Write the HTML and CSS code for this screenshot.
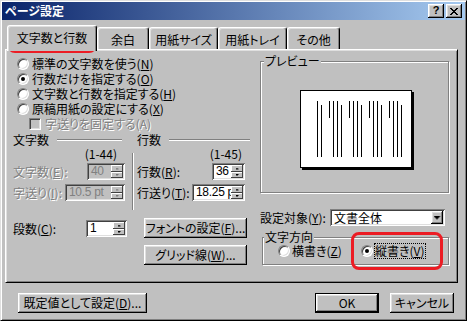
FILE: index.html
```html
<!DOCTYPE html>
<html lang="ja">
<head>
<meta charset="utf-8">
<title>ページ設定</title>
<link rel="stylesheet" href="styles.css">
</head>
<body>
<div class="window">
  <div class="titlebar">
    <span class="title">ページ設定</span>
    <div class="tbtns">
      <span class="tbtn help">?</span>
      <span class="tbtn"><svg width="8" height="7" viewBox="0 0 8 7" shape-rendering="crispEdges"><path d="M0 0h2v1h-2zM6 0h2v1h-2zM1 1h2v1h-2zM5 1h2v1h-2zM2 2h4v1h-4zM3 3h2v1h-2zM2 4h4v1h-4zM1 5h2v1h-2zM5 5h2v1h-2zM0 6h2v1h-2zM6 6h2v1h-2z"/></svg></span>
    </div>
  </div>
  <div class="client">
    <div class="tabs">
      <div class="tab active t1">文字数と行数</div>
      <div class="tab t2">余白</div>
      <div class="tab t3">用紙サイズ</div>
      <div class="tab t4">用紙トレイ</div>
      <div class="tab t5">その他</div>
    </div>
    <div class="panel">
      <div class="col-left">
        <div class="options">
          <div class="opt"><span class="radio"></span><span>標準の文字数を使う(<u>N</u>)</span></div>
          <div class="opt"><span class="radio on"></span><span>行数だけを指定する(<u>O</u>)</span></div>
          <div class="opt"><span class="radio"></span><span>文字数と行数を指定する(<u>H</u>)</span></div>
          <div class="opt"><span class="radio"></span><span>原稿用紙の設定にする(<u>X</u>)</span></div>
          <div class="opt sub"><span class="check"></span><span class="dis">字送りを固定する(A)</span></div>
        </div>
        <div class="groups">
          <div class="group g1">
            <div class="ghead">文字数</div>
            <div class="range">(1-44)</div>
            <div class="frow">
              <span class="dis">文字数(<u>E</u>):</span>
              <span class="spin off w38"><span class="val">40</span><span class="arrows"><span class="arr up"></span><span class="arr dn"></span></span></span>
            </div>
            <div class="frow">
              <span class="dis">字送り(<u>I</u>):</span>
              <span class="spin off w60"><span class="val">10.5 pt</span><span class="arrows"><span class="arr up"></span><span class="arr dn"></span></span></span>
            </div>
          </div>
          <div class="sep"></div>
          <div class="group g2">
            <div class="ghead">行数</div>
            <div class="range">(1-45)</div>
            <div class="frow">
              <span>行数(<u>R</u>):</span>
              <span class="spin w33"><span class="val">36</span><span class="arrows"><span class="arr up"></span><span class="arr dn"></span></span></span>
            </div>
            <div class="frow">
              <span>行送り(<u>T</u>):</span>
              <span class="spin w53"><span class="val">18.25 pt</span><span class="arrows"><span class="arr up"></span><span class="arr dn"></span></span></span>
            </div>
          </div>
        </div>
        <div class="brow">
          <div class="danshu">
            <span>段数(<u>C</u>):</span>
            <span class="spin w41"><span class="val">1</span><span class="arrows"><span class="arr up"></span><span class="arr dn"></span></span></span>
          </div>
          <div class="bcol">
            <div class="btn">フォントの設定(<u>F</u>)...</div>
            <div class="btn">グリッド線(<u>W</u>)...</div>
          </div>
        </div>
      </div>
      <div class="col-right">
        <fieldset class="frame preview">
          <legend>プレビュー</legend>
          <div class="pv-body">
            <div class="page">
              <svg width="110" height="76" viewBox="0 0 110 76" shape-rendering="crispEdges"><path fill="none" stroke="#000" stroke-width="1" d="M16.5 10V66M20.5 14V66M28.5 10V27M32.5 10V66M36.5 10V66M40.5 14V66M48.5 10V27M52.5 10V66M56.5 10V66M60.5 14V66M68.5 10V27M72.5 10V66M76.5 10V66M80.5 14V66M88.5 10V27M92.5 10V66M96.5 10V66M100.5 14V66"/></svg>
            </div>
          </div>
        </fieldset>
        <div class="target">
          <span>設定対象(<u>Y</u>):</span>
          <span class="select"><span class="val">文書全体</span><span class="ddbtn"></span></span>
        </div>
        <fieldset class="frame dir">
          <legend>文字方向</legend>
          <div class="dir-row">
            <div class="dopt first"><span class="radio"></span><span>横書き(<u>Z</u>)</span></div>
            <div class="dopt"><span class="radio on"></span><span class="focus">縦書き(<u>V</u>)</span></div>
          </div>
        </fieldset>
      </div>
    </div>
    <div class="footer">
      <div class="btn b-default">既定値として設定(<u>D</u>)...</div>
      <div class="btn b-ok">OK</div>
      <div class="btn b-cancel">キャンセル</div>
    </div>
  </div>
  <div class="mark mark-tab"></div>
  <div class="mark mark-dir"></div>
</div>
</body>
</html>
```

FILE: styles.css
```css
* { box-sizing: border-box; }
html, body { margin: 0; padding: 0; }
body {
  width: 467px; height: 321px; overflow: hidden;
  background: #c0c0c0; color: #000;
  font: 12px/14px "Noto Sans CJK JP", "MS UI Gothic", sans-serif;
  font-feature-settings: "palt";
}
u { text-decoration: underline; text-underline-offset: 1px; }

.window {
  position: relative;
  width: 467px; height: 321px;
  background: #c0c0c0;
  border: 1px solid; border-color: #dfdfdf #000 #000 #dfdfdf;
  box-shadow: inset 1px 1px #fff, inset -1px -1px #808080;
  padding: 1px;
  display: flex; flex-direction: column;
}
.titlebar {
  height: 18px; flex: none;
  display: flex; align-items: center; justify-content: space-between;
  background: linear-gradient(to right, #0a246a, #a6caf0);
  padding: 0 3px;
}
.title { color: #fff; font-weight: bold; }
.tbtns { display: flex; gap: 2px; }
.tbtn {
  width: 16px; height: 14px;
  background: #c0c0c0;
  box-shadow: inset -1px -1px #000, inset 1px 1px #fff, inset -2px -2px #808080, inset 2px 2px #dfdfdf;
  display: flex; align-items: center; justify-content: center;
}
.help { font: bold 11px/1 "Liberation Sans", sans-serif; padding-bottom: 1px; }

.client { padding-top: 5px; display: flex; flex-direction: column; }
.tabs { display: flex; align-items: flex-end; height: 24px; margin-left: 5px; }
.tab {
  height: 22px; padding-top: 2px;
  display: flex; align-items: center; justify-content: center;
  white-space: nowrap;
  border: 1px solid; border-bottom: 0;
  border-color: #fff #000 #000 #fff;
  border-radius: 3px 3px 0 0;
  box-shadow: inset -1px 0 #808080, inset 1px 1px #dfdfdf;
  background: #c0c0c0;
}
.tab.active { height: 26px; margin-bottom: -2px; padding-top: 0; padding-bottom: 2px; position: relative; z-index: 1; }
.t1 { width: 90px; }
.t2 { width: 52px; }
.t3 { width: 69px; }
.t4 { width: 69px; }
.t5 { width: 53px; }

.panel {
  height: 234px; flex: none;
  margin: 0 7px 0 3px;
  border: 1px solid; border-color: #fff #000 #000 #fff;
  box-shadow: inset 1px 1px #dfdfdf, inset -1px -1px #808080;
  display: flex;
}
.col-left { width: 254px; padding-left: 7px; flex: none; }
.options { padding: 6px 0 0 4px; }
.opt { height: 15px; display: flex; align-items: center; gap: 3px; white-space: nowrap; }
.opt.sub { margin-left: 12px; gap: 4px; }

.radio {
  width: 12px; height: 12px; flex: none;
  border-radius: 50%; background: #fff;
  border: 1px solid; border-color: #808080 #fff #fff #808080;
  box-shadow: inset 1px 1px #404040, inset -1px -1px #dfdfdf;
  display: flex; align-items: center; justify-content: center;
}
.radio.on::after { content: ""; width: 4px; height: 4px; background: #000; border-radius: 50%; }
.check {
  width: 12px; height: 12px; flex: none;
  background: #c0c0c0;
  border: 1px solid; border-color: #808080 #fff #fff #808080;
  box-shadow: inset 1px 1px #404040, inset -1px -1px #dfdfdf;
}
.dis { color: #808080; text-shadow: 1px 1px 0 #fff; }

.groups { display: flex; align-items: flex-start; margin-top: 2px; }
.group { display: flex; flex-direction: column; flex: none; }
.g1 { width: 112px; }
.g2 { width: 113px; }
.ghead { height: 14px; display: flex; align-items: center; gap: 8px; }
.ghead::after { content: ""; flex: 1; border-top: 1px solid #808080; border-bottom: 1px solid #fff; margin-right: 3px; }
.g2 .ghead::after { margin-right: 0; }
.range { height: 14px; text-align: right; padding-right: 8px; }
.frow { height: 17px; margin-top: 2px; display: flex; align-items: center; justify-content: space-between; white-space: nowrap; }
.frow + .frow { margin-top: 4px; }
.g2 .frow { padding-right: 5px; }
.sep { width: 2px; height: 57px; margin: 20px 3px 0 7px; border-left: 1px solid #808080; border-right: 1px solid #fff; flex: none; }

.spin {
  height: 17px; flex: none;
  display: flex; background: #fff; padding: 2px;
  box-shadow: inset 1px 1px #808080, inset -1px -1px #fff, inset 2px 2px #404040, inset -2px -2px #dfdfdf;
}
.spin.off { background: #c0c0c0; color: #808080; }
.w33 { width: 33px; }
.w38 { width: 38px; }
.w41 { width: 41px; }
.w53 { width: 53px; }
.w60 { width: 60px; }
.val { flex: 1; min-width: 0; overflow: hidden; white-space: nowrap; line-height: 13px; padding-left: 1px; }
.spin .val { font-family: "Liberation Sans", sans-serif; letter-spacing: -0.3px; padding-left: 2px; }
.arrows { width: 12px; flex: none; display: flex; flex-direction: column; }
.arr {
  display: flex; align-items: center; justify-content: center;
  background: #c0c0c0;
  box-shadow: inset -1px -1px #404040, inset 1px 1px #fff;
}
.arr.up { height: 7px; }
.arr.dn { height: 6px; }
.arr::after { content: ""; width: 3px; height: 2px; background: #000; }
.arr.up::after { clip-path: polygon(1px 0, 2px 0, 2px 1px, 3px 1px, 3px 2px, 0 2px, 0 1px, 1px 1px); }
.arr.dn::after { clip-path: polygon(0 0, 3px 0, 3px 1px, 2px 1px, 2px 2px, 1px 2px, 1px 1px, 0 1px); }
.spin.off .arr::after { background: #808080; }

.brow { display: flex; margin-top: 8px; }
.danshu { width: 114px; height: 17px; margin-top: 2px; display: flex; align-items: center; justify-content: space-between; white-space: nowrap; }
.bcol { margin-left: 17px; width: 103px; display: flex; flex-direction: column; gap: 7px; }
.btn {
  height: 20px;
  display: flex; align-items: center; justify-content: center;
  background: #c0c0c0; white-space: nowrap;
  box-shadow: inset -1px -1px #000, inset 1px 1px #fff, inset -2px -2px #808080, inset 2px 2px #dfdfdf;
}

.col-right { width: 189px; flex: none; display: flex; flex-direction: column; }
.frame {
  margin: 0; padding: 0; min-width: 0;
  border: 1px solid #808080;
  box-shadow: inset 1px 1px #fff, 1px 1px #fff;
}
.frame legend { padding: 0 1px; line-height: 14px; background: #c0c0c0; }
.preview { margin-top: 4px; height: 139px; }
.preview legend { margin-left: 3px; }
.pv-body { padding: 22px 0 0 39px; }
.page { width: 112px; height: 78px; background: #fff; border: 1px solid #000; box-shadow: 2px 2px 0 #000; }
.page svg { display: block; }

.target { display: flex; align-items: center; height: 17px; margin-top: 16px; white-space: nowrap; }
.select {
  margin-left: auto; margin-right: 4px;
  width: 115px; height: 17px;
  display: flex; background: #fff; padding: 2px;
  box-shadow: inset 1px 1px #808080, inset -1px -1px #fff, inset 2px 2px #404040, inset -2px -2px #dfdfdf;
}
.select .val { padding-left: 2px; }
.ddbtn {
  width: 12px; flex: none;
  display: flex; align-items: center; justify-content: center;
  background: #c0c0c0;
  box-shadow: inset -1px -1px #000, inset 1px 1px #fff, inset -2px -2px #808080, inset 2px 2px #dfdfdf;
}
.ddbtn::after {
  content: ""; width: 7px; height: 4px; background: #000;
  clip-path: polygon(0 0, 7px 0, 7px 1px, 6px 1px, 6px 2px, 5px 2px, 5px 3px, 4px 3px, 4px 4px, 3px 4px, 3px 3px, 2px 3px, 2px 2px, 1px 2px, 1px 1px, 0 1px);
}

.dir { margin: 4px 0 0 2px; height: 35px; }
.dir legend { margin-left: 1px; }
.dir-row { display: flex; align-items: center; height: 14px; padding-left: 15px; white-space: nowrap; }
.dopt { display: flex; align-items: center; gap: 2px; }
.dopt.first { width: 83px; }
.dopt .focus { outline: 1px dotted #000; outline-offset: -1px; padding: 1px 1px; margin-left: -1px; }

.footer { display: flex; margin-top: 10px; padding: 0 11px 0 16px; }
.b-default { width: 129px; }
.b-ok { width: 64px; margin-left: auto; border: 1px solid #000; }
.b-cancel { width: 64px; margin-left: 11px; }

.mark { position: absolute; border: 3px solid #ec1c24; border-radius: 8px; pointer-events: none; }
.mark-tab { left: 6px; top: 24px; width: 90px; height: 28px; }
.mark-dir { left: 350px; top: 231px; width: 92px; height: 38px; }
```
